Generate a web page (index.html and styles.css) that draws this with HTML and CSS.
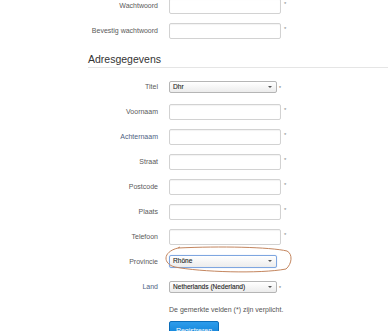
FILE: index.html
```html
<!DOCTYPE html>
<html lang="nl">
<head>
<meta charset="utf-8">
<title>Registreren</title>
<link rel="stylesheet" href="styles.css">
</head>
<body>
<div class="form">
  <div class="row"><label class="lbl">Wachtwoord</label><div class="input"></div><span class="req">*</span></div>
  <div class="row"><label class="lbl">Bevestig wachtwoord</label><div class="input"></div><span class="req">*</span></div>

  <h3 class="legend">Adresgegevens</h3>

  <div class="row"><label class="lbl">Titel</label><div class="select">Dhr</div><span class="req req-low">*</span></div>
  <div class="row"><label class="lbl">Voornaam</label><div class="input"></div><span class="req">*</span></div>
  <div class="row"><label class="lbl lbl-blue">Achternaam</label><div class="input"></div><span class="req">*</span></div>
  <div class="row"><label class="lbl">Straat</label><div class="input"></div><span class="req">*</span></div>
  <div class="row"><label class="lbl">Postcode</label><div class="input"></div><span class="req">*</span></div>
  <div class="row"><label class="lbl">Plaats</label><div class="input"></div><span class="req">*</span></div>
  <div class="row"><label class="lbl">Telefoon</label><div class="input"></div><span class="req">*</span></div>
  <div class="row"><label class="lbl">Provincie</label>
    <div class="select select-focus">Rhône
      <svg class="circle" width="132" height="30" viewBox="0 0 132 30"><path d="M16 2 C58 0 108 1 125 5 C131 8 130 18 124 23 C98 28 38 26 13 21 C1 18 0 6 16 2 Z M16 2 L18 1" fill="none" stroke="#c4865f" stroke-width="1"/></svg>
    </div>
  </div>
  <div class="row"><label class="lbl lbl-blue">Land</label><div class="select">Netherlands (Nederland)</div><span class="req req-low">*</span></div>

  <p class="note">De gemerkte velden (*) zijn verplicht.</p>
  <button class="btn">Registreren</button>
</div>
</body>
</html>
```
FILE: styles.css
```css
html, body {
  margin: 0;
  padding: 0;
  background: #fff;
  overflow: hidden;
}
body {
  width: 388px;
  height: 331px;
  font-family: "Liberation Sans", Arial, sans-serif;
  color: #555;
}
.form {
  margin-top: -7px;
  padding-left: 88px;
}
.row {
  display: grid;
  grid-template-columns: 81px 112px auto;
  align-items: center;
  height: 25px;
}
.lbl {
  font-size: 7px;
  line-height: 1;
  text-align: right;
  padding-right: 11px;
  color: #5a5a5a;
}
.lbl-blue {
  color: #4f5f82;
}
.input {
  width: 112px;
  height: 16px;
  box-sizing: border-box;
  border: 1px solid #d2d2d2;
  border-radius: 2px;
  background: #fff;
  box-shadow: inset 0 1px 1px rgba(0,0,0,0.05);
}
.req {
  align-self: start;
  margin-top: 8px;
  margin-left: 3px;
  font-size: 6px;
  line-height: 1;
  color: #888;
}
.req-low {
  margin-top: 12px;
  margin-left: -2px;
  font-size: 5px;
  color: #666;
}
.select {
  position: relative;
  width: 108px;
  height: 12px;
  box-sizing: border-box;
  border: 1px solid #b5b5b5;
  border-radius: 2px;
  background: linear-gradient(#ffffff, #ececec);
  font-size: 6.6px;
  line-height: 10px;
  padding-left: 3px;
  color: #222;
  -webkit-text-stroke: 0.1px #222;
  white-space: nowrap;
}
.select::after {
  content: "";
  position: absolute;
  right: 4px;
  top: 4px;
  border-left: 2px solid transparent;
  border-right: 2px solid transparent;
  border-top: 2px solid #555;
}
.select-focus {
  border-color: #7ea6e0;
  box-shadow: 0 0 1px #a9c4ec;
  height: 13px;
}
.circle {
  position: absolute;
  left: -8px;
  top: -10px;
  overflow: visible;
}
.legend {
  margin: 0 0 6px 0;
  padding: 9px 0 1px 0;
  font-size: 10.5px;
  line-height: 14px;
  font-weight: normal;
  color: #333;
  border-bottom: 1px solid #e5e5e5;
}
.note {
  margin: 6px 0 0 81px;
  font-size: 7px;
  line-height: 10px;
  color: #555;
}
.btn {
  display: block;
  margin: 6px 0 0 81px;
  width: 50px;
  height: 18px;
  padding: 2px 0 0 0;
  border: 1px solid #0b6db9;
  border-radius: 2px;
  background: linear-gradient(#2d9ceb, #0b7dd3);
  color: #fff;
  font-family: "Liberation Sans", Arial, sans-serif;
  font-size: 7px;
  line-height: 8px;
  text-align: center;
}
```
